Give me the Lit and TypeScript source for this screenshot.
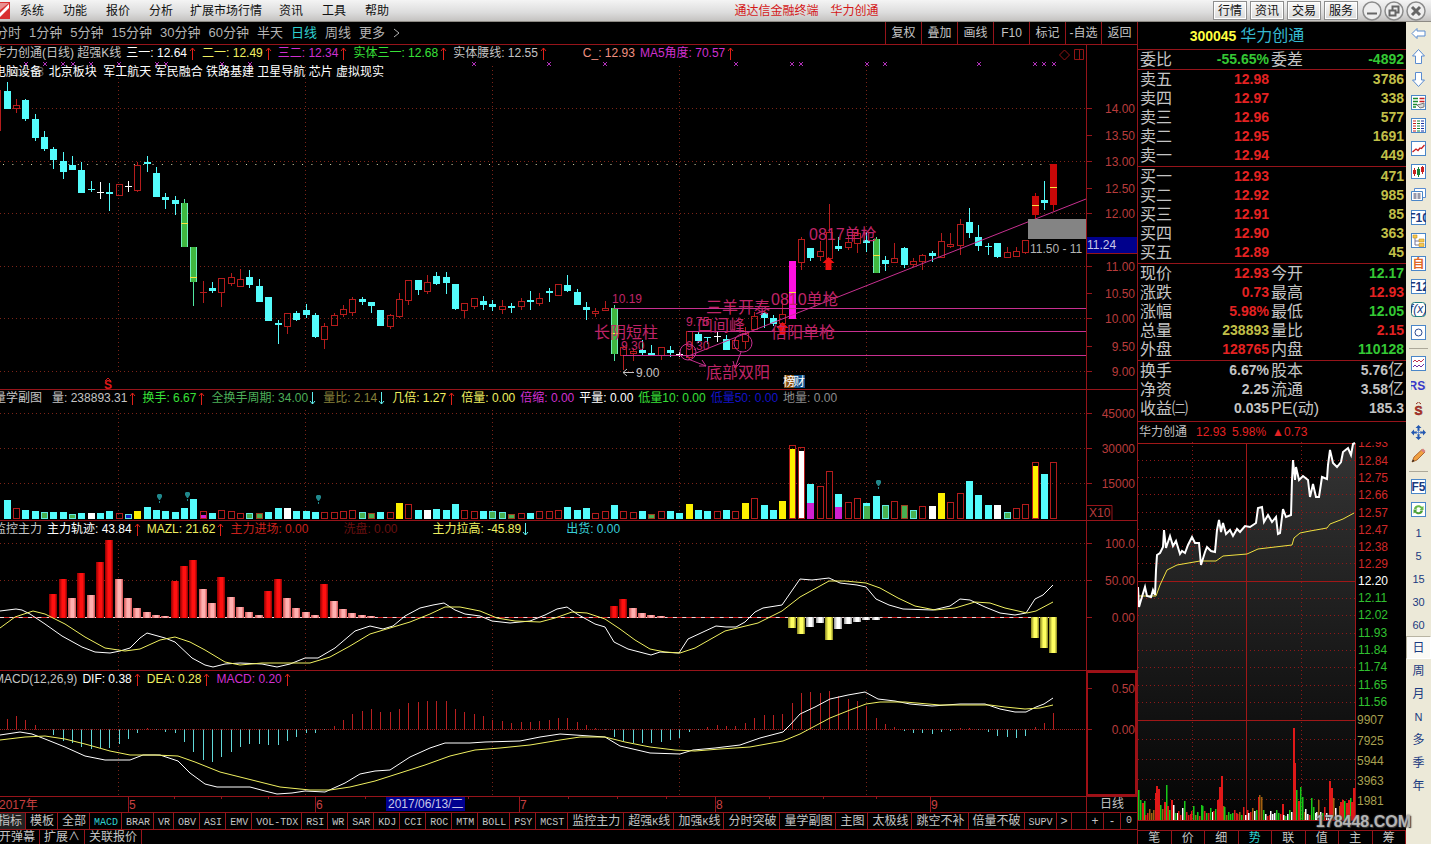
import { LitElement, html, svg, css } from "lit";
import { customElement, state } from "lit/decorators.js";

type Candle = [string, number, number, number, number];
type Legend = { t?: string; c?: string; a?: "up" | "down"; gap?: boolean };

/* Bars share one horizontal step across the four stacked panels. */
const STEP = 9.346;
const barX = (i: number) => Math.round(6.5 + STEP * i);

const CANDLES: Candle[] = [
  ["c",82,91,109,109],["r",99,105,108,113],["c",99,100,119,121],["c",114,119,138,141],["c",131,137,149,151],
  ["c",147,149,160,169],["c",152,161,172,179],["c",156,165,170,170],["c",162,170,193,193],["c",181,189,190,192],
  ["w",182,192,193,199],["c",183,192,194,211],["r",184,184,195,195],["w",181,186,187,192],["r",162,165,190,192],
  ["c",156,162,164,172],["c",167,173,197,197],["c",193,197,200,209],["c",196,200,204,215],["g",199,203,247,247],
  ["g",247,247,282,306],["r",281,292,292,303],["c",282,288,291,293],["r",278,278,292,307],["r",273,277,283,286],
  ["r",269,279,286,287],["c",270,277,285,288],["c",279,286,302,302],["c",297,297,321,321],["c",320,323,325,344],
  ["r",313,313,326,334],["c",311,313,320,321],["c",304,310,315,318],["c",313,315,337,338],["r",323,326,339,349],
  ["r",313,315,325,326],["r",305,309,314,317],["r",297,299,312,316],["c",297,299,302,305],["c",302,302,306,313],
  ["c",310,310,326,326],["r",314,315,326,329],["r",293,299,316,318],["r",280,280,300,305],["c",280,280,290,295],
  ["r",275,282,291,294],["c",272,276,284,285],["c",272,277,283,294],["c",284,284,309,310],["r",303,303,310,318],
  ["r",298,298,306,309],["c",296,301,305,310],["c",300,304,307,311],["r",300,306,309,314],["c",303,306,308,313],
  ["r",298,301,306,310],["c",291,300,302,310],["r",293,298,303,306],["c",288,291,293,302],["r",284,284,295,296],
  ["c",275,285,291,292],["c",289,292,305,305],["c",302,307,310,320],["r",308,311,313,317],["r",301,308,310,311],
  ["g",305,308,354,361],["r",345,347,355,370],["r",348,351,353,361],["c",340,350,353,355],["c",345,353,355,355],
  ["r",347,347,355,360],["c",346,350,353,357],["w",352,354,355,357],["r",331,331,357,360],["c",332,334,341,343],
  ["c",337,337,338,344],["w",332,336,337,342],["c",335,339,350,350],["r",338,340,348,349],["r",327,333,341,349],
  ["r",312,316,329,330],["c",312,313,318,328],["c",315,318,324,326],["r",301,314,323,328],["m",261,261,319,319],
  ["r",237,239,262,270],["c",248,248,258,261],["r",241,251,256,261],["r",204,232,258,260],["c",237,246,249,251],
  ["r",235,242,247,250],["r",229,233,243,253],["c",232,240,243,252],["g",237,239,273,273],["c",256,260,264,271],
  ["r",243,258,262,263],["c",247,248,265,268],["r",258,261,264,267],["r",254,255,261,270],["c",251,253,256,262],
  ["r",233,241,257,258],["r",233,244,246,248],["r",219,224,245,255],["c",208,222,233,238],["c",225,237,246,251],
  ["c",243,246,247,255],["c",243,243,257,258],["r",247,252,257,258],["r",247,251,256,257],["r",240,240,252,254],
  ["R",193,196,215,219],["c",181,200,203,210],["R",164,164,205,211],
];
const MID_MARKS: [number, number][] = [[19,223],[20,277],[65,333],[84,292],[93,255],[110,205],[112,187]];

const VOLUME =
  "c500 r508 c510 c511 g512 c512 c512 g514 c513 w513 c513 c511 r513 b514 y511 c507 c510 c511 c512 c508 c499 p511 c513 r510 r511 r513 g513 g513 c512 c508 w508 c511 c511 c512 r512 r512 r511 r510 g512 g513 c512 r512 y503 r504 c510 w510 c509 c510 c504 r510 r511 c511 g511 g512 g514 r513 c513 r511 r511 r510 c507 c510 c508 r513 r511 c505 r511 r512 c511 g514 r511 c511 c513 y504 c510 c511 r511 c510 r511 y503 r498 c505 c510 y501 y445 w447 c484 r486 r471 c494 r502 r498 c503 c496 g505 r501 g505 g510 r506 w506 y493 r502 r493 c481 c495 c505 w505 g512 r508 r504 y462 c474 r462".split(" ");

const FORCE: [number, string, number][] = [
  [5,"R",594],[6,"R",579],[7,"P",598],[8,"R",573],[9,"P",595],[10,"R",562],[11,"R",540],[12,"P",579],[13,"P",598],[14,"P",608],
  [15,"P",612],[16,"P",615],[17,"P",616],[18,"R",581],[19,"R",566],[20,"R",560],[21,"P",589],[22,"P",603],[23,"R",577],[24,"P",597],
  [25,"P",607],[26,"P",612],[27,"P",615],[28,"R",591],[29,"R",579],[30,"P",598],[31,"P",608],[32,"P",612],[33,"P",615],[34,"R",584],
  [35,"P",601],[36,"P",609],[37,"P",613],[38,"P",615],[39,"P",616],[65,"R",606],[66,"R",599],[67,"P",608],[68,"P",613],[69,"P",615],
  [70,"P",616],[84,"Y",627],[85,"Y",633],[86,"W",626],[87,"W",622],[88,"Y",639],[89,"W",628],[90,"W",623],[91,"W",621],[92,"W",619],
  [93,"W",619],[110,"Y",637],[111,"Y",647],[112,"Y",652],
];
const FORCE_WHITE = "0,611 16,609 22,610 30,614 45,624 62,636 82,647 95,652 110,653 120,651 130,648 140,638 147,633 165,638 175,642 192,658 205,665 213,667 225,664 240,663 262,664 277,667 290,664 305,658 318,658 335,648 355,631 370,626 383,629 393,626 405,616 420,608 433,605 444,603 455,610 465,614 480,616 492,621 510,623 530,621 545,615 557,609 567,607 577,614 595,624 605,627 614,642 628,649 651,655 660,652 679,653 688,639 716,626 726,627 736,627 745,622 755,612 763,608 782,605 791,592 800,579 812,580 829,578 840,583 857,585 866,587 876,599 889,605 903,609 933,610 950,606 960,599 970,600 985,607 1000,613 1015,615 1026,613 1035,599 1043,595 1053,585";
const FORCE_YELLOW = "0,628 15,617 33,611 45,614 65,624 85,637 105,648 125,651 140,649 160,640 175,637 190,642 205,650 225,662 240,665 262,663 290,663 310,663 330,657 350,646 370,634 390,628 410,622 430,614 445,607 460,607 480,611 497,618 515,621 540,622 555,618 572,612 587,613 605,619 620,629 635,640 650,649 665,652 680,653 695,648 725,631 758,623 782,611 800,597 829,581 845,581 866,583 880,588 898,598 915,606 935,610 955,608 975,602 990,603 1005,608 1027,613 1036,611 1053,602";

const MACD = [
  719,716,720,725,729,735,741,743,747,749,748,748,744,739,733,728,730,732,733,742,752,760,762,757,752,747,744,744,745,745,
  741,737,733,733,730,726,720,714,711,709,712,712,709,703,702,701,701,701,709,712,714,716,720,721,723,722,722,721,720,718,
  718,722,725,728,730,737,741,743,743,743,742,740,738,732,730,727,725,726,726,723,718,715,715,714,703,693,692,693,691,696,
  699,701,706,718,724,727,731,733,733,734,732,731,728,728,730,732,736,737,738,736,727,723,713,
];
const MACD_WHITE = "0,735 20,732 32,734 45,739 65,747 85,756 105,760 130,760 143,755 160,755 178,761 190,773 205,784 217,787 250,787 265,791 277,794 292,793 305,791 325,792 345,783 360,774 375,771 390,770 410,757 430,748 445,743 470,743 485,742 520,741 540,737 560,734 575,735 605,737 620,746 650,753 680,754 693,750 715,748 740,745 760,738 783,732 790,725 800,714 815,707 830,699 848,695 865,692 878,699 895,701 910,704 932,706 960,704 985,704 1000,709 1015,712 1026,712 1036,707 1044,704 1053,698";
const MACD_YELLOW = "0,740 25,737 45,736 65,739 85,744 110,751 130,755 155,755 178,756 195,762 220,772 240,777 260,782 280,787 310,790 330,790 350,787 375,781 400,773 425,765 450,756 475,750 500,748 530,745 560,740 580,737 605,737 625,742 650,747 675,750 695,751 720,749 750,747 783,741 800,734 830,718 850,710 866,704 880,702 905,702 940,705 990,705 1005,707 1025,709 1040,708 1053,705";

const MINI_PRICE = "1138,587 1139,607 1141,600 1145,587 1147,596 1151,597 1153,590 1155,595 1156,570 1157,555 1160,553 1163,547 1164,530 1166,548 1168,542 1170,536 1173,546 1176,541 1180,554 1182,551 1185,553 1188,545 1192,537 1195,543 1199,543 1201,565 1205,552 1207,547 1211,551 1215,552 1217,530 1219,520 1221,532 1223,523 1226,534 1230,530 1233,536 1237,529 1240,532 1245,526 1250,527 1256,523 1258,508 1262,507 1264,522 1268,515 1272,522 1276,517 1278,534 1280,533 1283,509 1286,517 1291,515 1292,480 1293,460 1295,480 1296,467 1299,480 1303,476 1308,480 1310,497 1313,484 1316,497 1319,497 1322,477 1327,479 1328,465 1330,450 1333,463 1337,467 1341,462 1343,452 1348,448 1351,455 1353,444 1355,443";
const MINI_AVG = "1138,596 1156,596 1160,585 1167,570 1177,565 1200,561 1216,561 1223,556 1247,554 1258,549 1292,545 1294,538 1300,533 1310,531 1327,528 1330,524 1343,519 1354,513";

const TICKS: Record<number, [number, string]> = {
  0: [790,"g"], 1: [800,"g"], 2: [803,"r"], 3: [801,"g"], 8: [810,"n"], 9: [793,"r"], 10: [786,"r"], 11: [789,"r"], 12: [805,"g"],
  14: [802,"r"], 15: [785,"g"], 16: [806,"r"], 18: [800,"r"], 25: [801,"g"], 30: [806,"g"], 34: [805,"g"], 35: [806,"g"],
  43: [800,"r"], 44: [787,"r"], 45: [776,"r"], 46: [806,"n"], 65: [797,"r"], 66: [795,"n"], 67: [797,"n"], 78: [804,"r"],
  84: [728,"r"], 85: [763,"r"], 86: [790,"g"], 87: [801,"r"], 88: [787,"g"], 89: [797,"g"], 94: [798,"g"], 95: [807,"g"], 98: [800,"n"],
  104: [781,"r"], 105: [788,"r"], 106: [798,"n"], 110: [802,"r"], 111: [800,"r"], 112: [801,"g"], 113: [803,"r"], 114: [800,"r"],
  115: [798,"g"], 116: [802,"r"], 117: [788,"r"],
};

const TABS = ["模板","全部","MACD","BRAR","VR","OBV","ASI","EMV","VOL-TDX","RSI","WR","SAR","KDJ","CCI","ROC","MTM","BOLL","PSY","MCST","监控主力","超强K线","加强K线","分时突破","量学副图","主图","太极线","跳空不补","倍量不破","SUPV"];

const mixed = (t: string) =>
  t.split(/([A-Z0-9\-+]+)/).filter(Boolean).map((p) => /^[A-Z0-9\-+]+$/.test(p) ? html`<span class="lat">${p}</span>` : p);

@customElement("app-root")
export class AppRoot extends LitElement {
  static styles = css`
    :host { display: block; --line: #96141a; --cjk: "Liberation Sans", "Noto Sans CJK SC", sans-serif;
      font: 12px/16px var(--cjk); color: #c4c4c4; background: #000; }
    * { box-sizing: border-box; }
    button { font: inherit; color: inherit; background: none; border: 0; padding: 0; margin: 0; white-space: nowrap; cursor: pointer; }
    svg { display: block; }
    .app { display: grid; grid-template-columns: minmax(0, 1fr) 269px 25px; grid-template-rows: 22px minmax(0, 1fr);
      height: 100vh; min-height: 600px; overflow: hidden; }

    .top { grid-column: 1 / -1; display: flex; align-items: center; background: linear-gradient(#f4f4f4, #dcdcdc 60%, #c4c2c0);
      border-bottom: 1px solid #8d8a84; color: #111; padding-right: 5px; }
    .menu { display: flex; gap: 19px; margin-left: 10px; }
    .menu .wide { margin: 0 -2px; }
    .title { flex: 1; display: flex; justify-content: center; gap: 12px; padding-left: 11px; color: #d41818; }
    .links { display: flex; gap: 3px; margin-right: 4px; }
    .links button { width: 34px; height: 19px; border: 1px solid #8e8e8e; background: linear-gradient(#fafafa, #dadada); box-shadow: inset 0 0 0 1px #fff; }
    .win { display: flex; gap: 2px; }

    .left { display: grid; grid-template-rows: 23px minmax(0, 345fr) minmax(0, 131fr) minmax(0, 150fr) minmax(0, 126fr) 16px 17px 14px; min-height: 0; }
    .periods { display: flex; justify-content: space-between; border-bottom: 1px solid var(--line); overflow: hidden; }
    .plist { display: flex; gap: 8px; margin-left: -5px; font-size: 13px; color: #b4b4b4; align-items: center; }
    .plist .on { color: #2fd0d0; }
    .tools { display: flex; font-size: 12px; }
    .tools button { width: 36px; border-left: 1px solid var(--line); }
    .panel { display: grid; grid-template-columns: minmax(0, 1fr) 51px; border-bottom: 1px solid var(--line); min-height: 0; }
    .plot { display: grid; grid-template: minmax(0, 1fr) / minmax(0, 1fr); min-height: 0; overflow: hidden; }
    .plot > * { grid-area: 1 / 1; }
    .plot > svg, .axis { width: 100%; height: 100%; min-height: 0; }
    .axis { border-left: 1px solid var(--line); }
    .axis.sel { border: 2px solid #a01016; }
    .head { z-index: 1; white-space: nowrap; align-self: start; margin-left: -6px; }
    .legend { display: flex; gap: 5px; line-height: 17px; }
    .legend i { display: inline-block; width: 10px; height: 13px; vertical-align: middle; }
    .blank { width: 25px; }
    .tags { white-space: pre; color: #fff; line-height: 20px; }
    .si { color: #c4c4c4 } .wh { color: #fff } .ye { color: #f0f060 } .ma { color: #d030d0 } .gr { color: #38e038 } .dg { color: #4cae58 }
    .ol { color: #86803a } .sa { color: #f09080 } .bl { color: #1414c8 } .gy { color: #8c8c8c } .re { color: #c8201c } .dr { color: #6a1010 } .te { color: #38cfd8 }

    .dates { display: grid; grid-template-columns: minmax(0, 1fr) 51px; border-bottom: 1px solid var(--line); }
    .dates svg { width: 100%; height: 100%; }
    .dates .unit { border-left: 1px solid var(--line); text-align: center; line-height: 15px; }
    .tabs { display: flex; border-bottom: 1px solid var(--line); overflow: hidden; line-height: 16px; }
    .tabs .set { display: flex; flex: 1; min-width: 0; overflow: hidden; margin-left: -6px; }
    .tabs button { flex: none; padding: 0 3px 0 4px; border-right: 1px solid var(--line); }
    .tabs .on { color: #2fd0d0; }
    .tabs .base { background: #222; }
    .tabs .zoom { display: flex; width: 51px; border-left: 1px solid var(--line); }
    .tabs .zoom button { flex: 1; padding: 0; }
    .tabs .zoom button:last-child { border: 0; }
    .lat { font: 10px/16px "Liberation Mono", monospace; }
    .foot { display: flex; margin-left: -5px; overflow: hidden; line-height: 14px; }
    .foot button { padding: 0 4px; border-right: 1px solid var(--line); }

    .side { display: grid; grid-template-rows: 28px auto auto auto auto auto 20px minmax(0, 1fr) 14px; border-left: 1px solid var(--line); min-height: 0; }
    .name { display: flex; justify-content: center; align-items: center; gap: 4px; border-bottom: 1px solid var(--line);
      font-size: 16px; line-height: 26px; color: #35b8d0; padding-right: 50px; margin: 0; font-weight: normal; }
    .name b { font-size: 14px; color: #ffff40; }
    table { width: 100%; border-collapse: collapse; table-layout: fixed; }
    .book { border-bottom: 1px solid var(--line); padding-bottom: 1px; }
    .book.tight { padding: 0; }
    .book.loose { padding-bottom: 3px; }
    tr { height: 19px; }
    th, td { padding: 0; line-height: 19px; white-space: nowrap; height: 19px; }
    th { font-size: 16px; font-weight: normal; text-align: left; padding-left: 2px; }
    td { font-size: 14px; font-weight: bold; text-align: right; }
    .c1 { width: 50px } .c2 { width: 81px } .c3 { width: 45px }
    td:last-child { padding-right: 2px; }
    td .yi { font-size: 16px; font-weight: normal; line-height: 18px; }
    .up { color: #e42222 } .dn { color: #34c834 } .vol { color: #c0bf48 }
    .mini-h { display: flex; gap: 6px; line-height: 20px; padding-left: 1px; }
    .mini-h .si { margin-right: 3px; }
    .mini { display: block; width: 100%; height: 100%; min-height: 0; }
    .stabs { display: flex; border-top: 1px solid var(--line); line-height: 15px; overflow: hidden; }
    .stabs button { flex: 1; border-right: 1px solid var(--line); }
    .stabs .on { color: #2fd0d0; }

    .dock { background: #ece9d8; color: #1a3a80; font-size: 11px; display: flex; flex-direction: column; min-height: 0; overflow: hidden; position: relative; }
    .dock button { height: 23px; display: flex; align-items: center; justify-content: center; flex: none; }
    .dock .cjk { font-size: 12px; }
    .dock .on { background: #fbfaf5; border: 1px solid #b8b4a2; border-right-color: #fff; border-bottom-color: #fff; }
    .dock hr { width: 19px; margin: 4px auto 3px; border: 0; border-top: 1px solid #aca899; flex: none; height: 1px; }
    .mark { position: absolute; right: 20px; bottom: 12px; font: bold 16px/20px "Liberation Sans", sans-serif; color: #b4b4b4;
      text-shadow: 0 0 2px #555, 1px 1px 1px #333; z-index: 3; }
    .frame { position: relative; }

    text { font-family: var(--cjk); font-size: 12px; }
    .note { font-size: 16px; fill: #c02468; }
    .ax { fill: #b83c3c; text-anchor: end; }
    .grid { stroke: #7c2418; stroke-dasharray: 1 3; fill: none; }
  `;

  @state() private period = "日线";
  @state() private tab = "MACD";

  private legend(items: Legend[]) {
    return html`<div class="legend">${items.map((l) => l.gap ? html`<span class="blank"></span>` : html`<span class=${l.c ?? "si"}>${l.t}${l.a
      ? html`<i><svg width="9" height="13" viewBox="0 0 9 13">${l.a === "up"
          ? svg`<path d="M5.500 13V1M3 4L5.500 1L8 4" fill="none" stroke="#e02018"/>`
          : svg`<path d="M4.500 0V12M2 9L4.500 12L7 9" fill="none" stroke="#60f0f0"/>`}</svg></i>` : ""}</span>`)}</div>`;
  }

  private verticals(y1: number, y2: number) {
    return [118.5, 305.5, 492.5, 679.5, 866.5].map((x) => svg`<path class="grid" d="M${x} ${y1}V${y2}"/>`);
  }
  private rows(ys: number[]) {
    return ys.map((y) => svg`<path class="grid" d="M0 ${y + 0.5}H1086"/>`);
  }

  private candle([k, hi, top, bot, lo]: Candle, i: number) {
    const x = barX(i), h = Math.max(bot - top, 1);
    const col: Record<string, string> = { c: "#54fcfc", r: "#b41c1c", w: "#fff", g: "#50e8a0", m: "#ff10e0", R: "#c80808" };
    const c = col[k];
    if (k === "r") return svg`<path d="M${x + 0.5} ${hi}V${top}M${x + 0.5} ${bot}V${lo}" stroke=${c}/>
      ${h < 2 ? svg`<path d="M${x - 3} ${top + 0.5}h7M${x + 0.5} ${top}v${lo - top}" stroke=${c}/>` : svg`<rect x=${x - 2.5} y=${top + 0.5} width="6" height=${h} fill="none" stroke=${c}/>`}`;
    const fill = k === "g" ? "#40b840" : c;
    return svg`<path d="M${x + 0.5} ${hi}V${lo}" stroke=${c}/><rect x=${x - 3} y=${top} width="7" height=${h} fill=${fill}/>
      ${k === "g" ? svg`<path d="M${x - 2.5} ${top}V${bot}M${x + 3.5} ${top}V${bot}" stroke="#70f0c0"/>` : ""}`;
  }

  private priceChart() {
    const xs = [26,45,63,73,91,119,157,166,222,250,474,549,605,736,792,801,867,885,979,1035,1044,1054];
    return svg`
      ${this.verticals(66, 374)}${this.rows([108, 161, 213, 266, 318, 371])}
      <path d="M3 164.500H1050" stroke="#d8d8b0" stroke-dasharray="1 8.346"/>
      ${xs.map((x) => svg`<path d="M${x - 2} 62l4 4m0 -4l-4 4" stroke="#b030b8"/>`)}
      <path d="M0.500 90V131" stroke="#b41c1c"/>
      ${CANDLES.map((c, i) => this.candle(c, i))}
      ${MID_MARKS.map(([i, y]) => svg`<path d="M${barX(i) - 3} ${y + 0.5}h7" stroke="#f8e040"/>`)}
      <g stroke="#c83090" fill="none">
        <path d="M614 308.500H1086M688 331.500H1086M623 355.500H1086M686 357L1086 199"/>
        <ellipse cx="688" cy="352" rx="8" ry="8"/><ellipse cx="743" cy="343" rx="9" ry="9"/>
        <path d="M688 359L706 366M699 366l7 0l-4 -6M741 352L735 368M733 361l2 7l5 -5"/>
      </g>
      <path d="M828.500 257l6 6h-3v7h-6v-7h-3zM782.500 322l6 6h-3v6h-6v-6h-3z" fill="#f01010"/>
      <g class="note">
        <text class="note" x="809" y="240">0817单枪</text><text class="note" x="771" y="305">0810单枪</text>
        <text class="note" x="706" y="313">三羊开泰</text><text class="note" x="697" y="331">凹间峰</text>
        <text class="note" x="594" y="338">长阴短柱</text><text class="note" x="771" y="338">倍阳单枪</text>
        <text class="note" x="706" y="378">底部双阳</text>
        <text x="612" y="303">10.19</text><text x="686" y="326">9.75</text><text x="621" y="350">9.30</text><text x="686" y="350">9.30</text>
      </g>
      <path d="M634 372.500H623M627 369l-4 3.500l4 3.500" stroke="#c4c4c4" fill="none"/>
      <text x="636" y="377" fill="#c4c4c4">9.00</text>
      <rect x="1028" y="219" width="58" height="20" fill="#848484"/>
      <text x="1030" y="253" fill="#b4b4b4">11.50 - 11</text>
      <text x="14" y="76" fill="#606060">14.53</text>
      <path d="M1064.500 50l5 5l-5 5l-5 -5zM1074.500 49.500h9v10h-9zM1079.500 49.500v10" fill="none" stroke="#901414"/>
      <path d="M105 381l3 -3l3 3" fill="none" stroke="#d01818"/><text x="104" y="389" fill="#e01818" font-weight="bold">S</text>
      <rect x="784" y="375" width="10" height="13" fill="#8a5010"/><rect x="794" y="375" width="11" height="13" fill="#10508c"/>
      <text x="783" y="386" fill="#fff" textLength="0">榜</text><text x="793" y="386" fill="#fff">财</text>`;
  }

  private volumeChart() {
    const col: Record<string, string> = { c: "#54fcfc", g: "#48b050", w: "#fff", y: "#fcf000", b: "#1020c0", p: "#d020d0" };
    return svg`${this.verticals(410, 519)}${this.rows([413, 448, 483])}
      ${VOLUME.map((v, i) => {
        const k = v[0], top = +v.slice(1), x = barX(i) - 3;
        if (k === "r") return svg`<rect x=${x + 0.5} y=${top + 0.5} width="6" height=${518 - top} fill="none" stroke="#b41c1c"/>`;
        const capped = (k === "y" || k === "w" || k === "p") && (top < 470 || k === "p");
        const edge = k === "g" || k === "b";
        return svg`<rect x=${x} y=${top + (capped ? 4 : 0)} width="7" height=${519 - top - (capped ? 4 : 0)} fill=${col[k]}/>
          ${capped || edge ? svg`<rect x=${x + 0.5} y=${top + 0.5} width="6" height=${518 - top} fill="none" stroke=${edge ? (i % 3 ? "#60e8e0" : "#a04020") : "#b41c1c"}/>` : ""}`;
      })}
      <path d="M807 503h7v16h-7zM835 507h7v12h-7z" fill="#d020d0"/><path d="M864 506h6v13h-6z" fill="#48b050"/>
      ${[[159, 494], [187, 492], [318, 495], [878, 480]].map(([x, y]) => svg`<path d="M${x - 1} ${y}h3l1 1v2l-2 3h-1l-2 -3v-2zM${x} ${y + 7}h1v2h-1z" fill="#20888c"/>`)}`;
  }

  private forceChart() {
    return svg`
      <defs>
        ${[["R", "#8c0000", "#ff1010"], ["P", "#d05050", "#ffb0b0"], ["Y", "#84801c", "#ffff60"], ["W", "#909090", "#fff"]].map(([id, a, b]) =>
          svg`<linearGradient id=${id}><stop offset="0" stop-color=${a}/><stop offset=".4" stop-color=${b}/><stop offset=".7" stop-color=${b}/><stop offset="1" stop-color=${a}/></linearGradient>`)}
      </defs>
      ${this.verticals(541, 670)}${this.rows([543, 580])}
      <path d="M0 617.500H1050" stroke="#d02020"/><path d="M0 617.500H1050" stroke="#f8d8d8" stroke-dasharray="4 5.346"/>
      ${FORCE.map(([i, k, y]) => svg`<rect x=${barX(i) - 4} y=${Math.min(y, 617)} width="8" height=${Math.abs(y - 617) + 1} fill="url(#${k})"/>`)}
      <polyline points=${FORCE_WHITE} fill="none" stroke="#fff"/><polyline points=${FORCE_YELLOW} fill="none" stroke="#f0f060"/>`;
  }

  private macdChart() {
    return svg`${this.verticals(690, 796)}
      <path d="M0 729.500H1086" stroke="#a01c1c" stroke-dasharray="1 1"/>
      ${MACD.map((y, i) => svg`<path d="M${barX(i) + 0.5} 729.500V${y}" stroke=${y < 730 ? "#b82020" : "#60d8d8"}/>`)}
      <polyline points=${MACD_WHITE} fill="none" stroke="#fff"/><polyline points=${MACD_YELLOW} fill="none" stroke="#f0f060"/>`;
  }

  private labels(items: [number, string][]) {
    return items.map(([y, t]) => svg`<path d="M1087 ${y + 0.5}h5" stroke="#96141a"/><text class="ax" x="1135" y=${y + 5}>${t}</text>`);
  }

  private miniChart() {
    const colors: Record<string, string> = { r: "#e01818", g: "#18c818", w: "#fff", n: "#a06010" };
    const bars = Array.from({ length: 118 }, (_, i) => {
      const near = TICKS[i];
      const n = (i * 37 + ((i * i) % 23) * 11) % 17;
      const top = near ? near[0] : 819 - Math.round(3 + n * (i > 100 || i < 20 ? 0.9 : 0.55));
      const k = near ? near[1] : ["r", "g", "w", "n", "r", "w", "g"][(i * 5 + n) % 7];
      return svg`<rect x=${Math.round(1138 + i * 1.84)} y=${top} width=${k === "r" && near ? 2 : 1.5} height=${820 - top} fill=${colors[k]}/>`;
    });
    const red: [number, string][] = [[442,"12.93"],[460,"12.84"],[477,"12.75"],[494,"12.66"],[512,"12.57"],[529,"12.47"],[546,"12.38"],[563,"12.29"]];
    const green: [number, string][] = [[598,"12.11"],[615,"12.02"],[633,"11.93"],[650,"11.84"],[667,"11.74"],[685,"11.65"],[702,"11.56"]];
    const vol: [number, string][] = [[720,"9907"],[741,"7925"],[761,"5944"],[781,"3963"],[801,"1981"]];
    return html`<svg class="mini" viewBox="1138 442 268 388" preserveAspectRatio="none">
      <defs><linearGradient id="shade" x1="0" y1="0" x2="0" y2="1"><stop offset="0" stop-color="#343434"/><stop offset=".75" stop-color="#101010"/><stop offset="1" stop-color="#040404"/></linearGradient></defs>
      <polygon points="1138,820 ${MINI_PRICE} 1355,820" fill="url(#shade)"/>
      ${[460,477,494,512,529,546,563,598,615,633,650,667,685,702,739,759,779,799].map((y) => svg`<path d="M1138 ${y + 0.5}H1355" stroke="#901818" stroke-dasharray="1 3"/>`)}
      <path d="M1192.500 442V820M1301.500 442V820" stroke="#901818" stroke-dasharray="1 3"/>
      <path d="M1138 443.500H1355M1138 581.500H1355M1138 720.500H1355M1246.500 443V820M1355.500 443V820M1138 820.500H1355" stroke="#a01818" fill="none"/>
      ${bars}
      <polyline points=${MINI_AVG} fill="none" stroke="#f0e040"/>
      <polyline points=${MINI_PRICE} fill="none" stroke="#fff" stroke-width="2"/>
      ${red.map(([y, t]) => svg`<text x="1358" y=${y + 5} fill="#d02828">${t}</text>`)}
      <text x="1358" y="585" fill="#fff">12.20</text>
      ${green.map(([y, t]) => svg`<text x="1358" y=${y + 4} fill="#30c030">${t}</text>`)}
      ${vol.map(([y, t]) => svg`<text x="1357" y=${y + 4} fill="#a8a050">${t}</text>`)}
    </svg>`;
  }

  private book(side: string, names: string, rows: [string, string][]) {
    return html`<div class="book"><table><tbody>${rows.map(([p, v], i) =>
      html`<tr><th scope="row" class="c1">${side}${names[i]}</th><td class="c2 up">${p}</td><td class="vol">${v}</td></tr>`)}</tbody></table></div>`;
  }

  private facts(cls: string, rows: string[][]) {
    return html`<div class="book ${cls}"><table><tbody>${rows.map(([a, b, bc, c, d, dc]) => html`<tr>
      <th scope="row" class="c1">${a}</th><td class="c2 ${bc}">${b}</td><th scope="row" class="c3">${c}</th>
      <td class=${dc}>${d.replace("亿", "")}${d.endsWith("亿") ? html`<span class="yi">亿</span>` : ""}</td></tr>`)}</tbody></table></div>`;
  }

  private icon(kind: string) {
    const box = svg`<rect x=".5" y=".5" width="14" height="14" fill="#fff" stroke="#4a86c8"/>`;
    const word = (t: string) => svg`${box}<text x="7.500" y="12" text-anchor="middle" font-size="10" fill="#1a3a80" font-weight="bold">${t}</text>`;
    const shapes: Record<string, unknown> = {
      left: svg`<path d="M1 7.500L6 2.500V5H14V10H6V12.500Z" fill="#fff" stroke="#5a8cd0"/>`,
      up: svg`<path d="M7.500 0.500L13.500 7H10.500V14.500H4.500V7H1.500Z" fill="#fff" stroke="#5a8cd0"/>`,
      down: svg`<path d="M7.500 14.500L13.500 8H10.500V0.500H4.500V8H1.500Z" fill="#fff" stroke="#5a8cd0"/>`,
      report: svg`${box}<path d="M2 3.500h5M2 6.500h5M2 9.500h4M2 12h3" stroke="#1c8a30" stroke-width="1.500"/><path d="M8.500 3.500h5M8.500 6.500h5" stroke="#c82020" stroke-width="1.500"/><path d="M6 10l3 3l4 -1v-4l-3 1z" fill="#d8d8d8" stroke="#777"/>`,
      list: svg`${box}<path d="M2 3h3M2 5.500h3M2 8h3M2 10.500h3M2 13h3" stroke="#c82020"/><path d="M6 3h3M6 5.500h3M6 8h3M6 10.500h3M6 13h3" stroke="#188030"/><path d="M10 3h3M10 5.500h3M10 8h3M10 10.500h3M10 13h3" stroke="#1830a0"/>`,
      trend: svg`${box}<path d="M1.500 11L5 8L7 9.500L9 7L10.500 7.500L13.500 4" fill="none" stroke="#c82020" stroke-width="1.300"/>`,
      candles: svg`${box}<path d="M3.500 4v8M11.500 2v8" stroke="#c82020"/><path d="M7.500 3v10" stroke="#188030"/><path d="M2 6h3v4H2zM10 3h3v5h-3z" fill="#c82020"/><path d="M6 5h3v6H6z" fill="#188030"/>`,
      stack: svg`<path d="M3.500 1.500h11v9h-11z" fill="#fff" stroke="#5a8cd0"/><path d="M.5 4.500h11v9H.5z" fill="#fff" stroke="#4a86c8"/><path d="M2.500 7h3M2.500 9h3M2.500 11h3M6.500 7h3M6.500 9h3M6.500 11h3" stroke="#335"/>`,
      f10: word("F10"), f12: word("F12"), f5: word("F5"),
      tree: svg`${box}<path d="M4 5v7h4M4 8h4" fill="none" stroke="#779"/><path d="M2 2h4v3H2zM8 6h5v3H8zM8 10.500h5v3H8z" fill="#f4c850" stroke="#c89020" stroke-width=".6"/>`,
      self: svg`${box}<text x="7.500" y="12" text-anchor="middle" font-size="11" font-weight="bold" fill="#e06828">自</text>`,
      fx: svg`<rect x=".5" y=".5" width="14" height="14" rx="3" fill="#fff" stroke="#208080"/><text x="7.500" y="11" text-anchor="middle" font-size="9" font-style="italic" fill="#1a3a80">f(x)</text>`,
      ring: svg`${box}<circle cx="7.500" cy="7.500" r="3.500" fill="none" stroke="#2a4a90"/>`,
      waves: svg`${box}<path d="M2 6l2 -2l2 2l2 -2l2 2l3 -3" fill="none" stroke="#c03050"/><path d="M2 11l2 -2l2 2l2 -2l2 2l3 -3" fill="none" stroke="#7030a0"/>`,
      rsi: svg`<text x="7.500" y="11" text-anchor="middle" font-size="10" font-weight="bold" fill="#3838c8">RSI</text>`,
      money: svg`<text x="7.500" y="13" text-anchor="middle" font-size="14" font-weight="bold" fill="#c03028" stroke="#702018" stroke-width=".5">S</text><path d="M5 2l2.500 -2l2.500 2" fill="none" stroke="#903020"/>`,
      move: svg`<path d="M7.500 0l3 3h-2v3h-2V3h-2zM7.500 15l3 -3h-2V9h-2v3h-2zM0 7.500l3 -3v2h3v2H3v2zM15 7.500l-3 -3v2H9v2h3v2z" fill="#2458b0"/><path d="M5.500 7.500h4M7.500 5.500v4" stroke="#7098d8"/>`,
      pen: svg`<path d="M1 14l2 -5L11 1.500l3 2.500L6 12z" fill="#f0a040" stroke="#985020" stroke-width=".8"/><path d="M10 2.500l3 2.500l1.500 -2L12 .5z" fill="#d88080"/><path d="M1 14l1 -2.500l1.500 1.500z" fill="#222"/>`,
      sync: svg`${box}<path d="M3 7c0 -4 6 -5 8 -2l1.500 -1v4h-4L10 6.500C8 4.500 6 5 5.500 7z" fill="#68b848"/><path d="M12 8.500c0 4 -6 5 -8 2L2.500 11.500v-4h4L5 9c2 2 4 1.500 4.500 -.5z" fill="#4ca038"/>`,
    };
    return html`<svg width="15" height="15" viewBox="0 0 15 15">${shapes[kind]}</svg>`;
  }

  render() {
    const group = (names: string[]) => names.map((n) => html`<button aria-label=${n}>${this.icon(n)}</button>`);
    return html`<div class="app">
      <header class="top">
        <svg width="10" height="17" viewBox="0 0 10 17"><rect width="10" height="17" fill="#d83030"/><path d="M0 11L9 2V6L0 15Z" fill="#fff"/><path d="M0 1h9L0 8z" fill="#e89090"/></svg>
        <nav class="menu">${["系统","功能","报价","分析","扩展市场行情","资讯","工具","帮助"].map((m) => html`<button class=${m.length > 2 ? "wide" : ""}>${m}</button>`)}</nav>
        <div class="title"><span>通达信金融终端</span><span>华力创通</span></div>
        <div class="links">${["行情","资讯","交易","服务"].map((m) => html`<button>${m}</button>`)}</div>
        <div class="win">${["M5 12.500h10", "M8.500 9V5.500h6v6h-3M5.500 9.500h6v5h-6z", "M6 6l8 8M14 6l-8 8"].map((d, i) => html`<button aria-label=${["minimize", "restore", "close"][i]}>
          <svg width="20" height="20" viewBox="0 0 20 20"><circle cx="10" cy="10" r="9" fill="#eee" stroke="#8c8c8c" stroke-width="1.500"/><path d=${d} fill="none" stroke="#666" stroke-width=${i === 2 ? 3 : 2}/></svg></button>`)}</div>
      </header>

      <main class="left">
        <div class="periods">
          <div class="plist">${["分时","1分钟","5分钟","15分钟","30分钟","60分钟","半天","日线","周线","更多"].map((p) =>
            html`<button class=${p === this.period ? "on" : ""} @click=${() => (this.period = p)}>${p}</button>`)}
            <svg width="8" height="10" viewBox="0 0 8 10"><path d="M1 1l5 4l-5 4" fill="none" stroke="#b4b4b4"/></svg></div>
          <div class="tools">${["复权","叠加","画线","F10","标记","-自选","返回"].map((t) => html`<button>${t}</button>`)}</div>
        </div>

        <section class="panel"><div class="plot">
          <svg viewBox="0 45 1086 344" preserveAspectRatio="none">${this.priceChart()}</svg>
          <div class="head">${this.legend([
            { t: "华力创通(日线) 超强K线" }, { t: "三一: 12.64", c: "wh", a: "up" }, { t: "二一: 12.49", c: "ye", a: "up" },
            { t: "三二: 12.34", c: "ma", a: "up" }, { t: "实体三一: 12.68", c: "gr", a: "up" }, { t: "实体腰线: 12.55", a: "up" },
            { gap: true }, { t: "C_: 12.93", c: "sa" }, { t: "MA5角度: 70.57", c: "ma", a: "up" }])}
            <div class="tags">电脑设备  北京板块  军工航天 军民融合 铁路基建 卫星导航 芯片 虚拟现实</div></div>
        </div>
          <svg class="axis" viewBox="1087 45 50 344" preserveAspectRatio="none">
            ${this.labels([[108,"14.00"],[135,"13.50"],[161,"13.00"],[188,"12.50"],[213,"12.00"],[266,"11.00"],[293,"10.50"],[318,"10.00"],[346,"9.50"],[371,"9.00"]])}
            <rect x="1087" y="237" width="50" height="16" fill="#00008c"/><path d="M1087 253.500h50" stroke="#96141a"/><text x="1087" y="249" fill="#c8c8e8">11.24</text>
          </svg></section>

        <section class="panel"><div class="plot">
          <svg viewBox="0 390 1086 130" preserveAspectRatio="none">${this.volumeChart()}</svg>
          <div class="head">${this.legend([
            { t: "量学副图" }, {}, { t: "量: 238893.31", a: "up" }, { t: "换手: 6.67", c: "gr", a: "up" }, { t: "全换手周期: 34.00", c: "dg", a: "down" },
            { t: "量比: 2.14", c: "ol", a: "down" }, { t: "几倍: 1.27", c: "ye", a: "up" }, { t: "倍量: 0.00", c: "ye" }, { t: "倍缩: 0.00", c: "ma" },
            { t: "平量: 0.00", c: "wh" }, { t: "低量10: 0.00", c: "gr" }, { t: "低量50: 0.00", c: "bl" }, { t: "地量: 0.00", c: "gy" }])}</div>
        </div>
          <svg class="axis" viewBox="1087 390 50 130" preserveAspectRatio="none">
            ${this.labels([[413,"45000"],[448,"30000"],[483,"15000"]])}
            <path d="M1087 505.500h25V520" fill="none" stroke="#96141a"/><text x="1089" y="517" fill="#b83c3c">X10</text>
          </svg></section>

        <section class="panel"><div class="plot">
          <svg viewBox="0 521 1086 149" preserveAspectRatio="none">${this.forceChart()}</svg>
          <div class="head">${this.legend([
            { t: "监控主力" }, { t: "主力轨迹: 43.84", c: "wh", a: "up" }, { t: "MAZL: 21.62", c: "ye", a: "up" }, { t: "主力进场: 0.00", c: "re" },
            { gap: true }, { t: "洗盘: 0.00", c: "dr" }, { gap: true }, { t: "主力拉高: -45.89", c: "ye", a: "down" }, { gap: true }, { t: "出货: 0.00", c: "te" }])}</div>
        </div>
          <svg class="axis" viewBox="1087 521 50 149" preserveAspectRatio="none">${this.labels([[543,"100.0"],[580,"50.00"],[617,"0.00"]])}</svg></section>

        <section class="panel"><div class="plot">
          <svg viewBox="0 671 1086 125" preserveAspectRatio="none">${this.macdChart()}</svg>
          <div class="head">${this.legend([
            { t: "MACD(12,26,9)" }, { t: "DIF: 0.38", c: "wh", a: "up" }, { t: "DEA: 0.28", c: "ye", a: "up" }, { t: "MACD: 0.20", c: "ma", a: "up" }])}</div>
        </div>
          <svg class="axis sel" viewBox="1088 673 47 121" preserveAspectRatio="none">${this.labels([[688,"0.50"],[729,"0.00"]])}</svg></section>

        <div class="dates">
          <svg viewBox="0 797 1086 15" preserveAspectRatio="none">
            <path d="M128.500 797v15M315.500 797v15M519.500 797v15M715.500 797v15M930.500 797v15M174.500 797v2M221.500 797v2M268.500 797v2M365.500 797v2M468.500 797v2M568.500 797v2M617.500 797v2M666.500 797v2M769.500 797v2M823.500 797v2M876.500 797v2" stroke="#96141a"/>
            <text x="-1" y="809" fill="#c84040">2017年</text>
            ${[[129,"5"],[316,"6"],[520,"7"],[716,"8"],[931,"9"]].map(([x, t]) => svg`<text x=${x} y="809" fill="#c84040">${t}</text>`)}
            <rect x="386" y="797" width="79" height="14" fill="#000090"/><text x="388" y="808" fill="#c8c8e8">2017/06/13/二</text>
          </svg>
          <div class="unit">日线</div>
        </div>

        <div class="tabs">
          <div class="set"><button class="base">指标</button>${TABS.map((t) => html`<button class=${t === this.tab ? "on" : ""} @click=${() => (this.tab = t)}>${mixed(t)}</button>`)}<button>&gt;</button></div>
          <div class="zoom"><button>+</button><button>-</button><button class="lat">0</button></div>
        </div>
        <div class="foot"><button>开弹幕</button><button>扩展∧</button><button>关联报价</button></div>
      </main>

      <aside class="side">
        <h1 class="name"><b>300045</b>华力创通</h1>
        ${this.facts("tight", [["委比", "-55.65%", "dn", "委差", "-4892", "dn"]])}
        ${this.book("卖", "五四三二一", [["12.98", "3786"], ["12.97", "338"], ["12.96", "577"], ["12.95", "1691"], ["12.94", "449"]])}
        ${this.book("买", "一二三四五", [["12.93", "471"], ["12.92", "985"], ["12.91", "85"], ["12.90", "363"], ["12.89", "45"]])}
        ${this.facts("", [["现价", "12.93", "up", "今开", "12.17", "dn"], ["涨跌", "0.73", "up", "最高", "12.93", "up"], ["涨幅", "5.98%", "up", "最低", "12.05", "dn"],
          ["总量", "238893", "vol", "量比", "2.15", "up"], ["外盘", "128765", "up", "内盘", "110128", "dn"]])}
        ${this.facts("loose", [["换手", "6.67%", "", "股本", "5.76亿", ""], ["净资", "2.25", "", "流通", "3.58亿", ""], ["收益㈡", "0.035", "", "PE(动)", "185.3", ""]])}
        <div class="mini-h up"><span class="si">华力创通</span><span>12.93</span><span>5.98%</span><span>▲0.73</span></div>
        ${this.miniChart()}
        <div class="stabs">${[..."笔价细势联值主筹"].map((t) => html`<button class=${t === "势" ? "on" : ""}>${t}</button>`)}</div>
      </aside>

      <nav class="dock">
        ${group(["left","up","down","report","list","trend","candles","stack","f10","tree","self","f12","fx","ring"])}<hr>
        ${group(["waves","rsi","money","move","pen"])}<hr>
        ${group(["f5","sync"])}
        ${["1","5","15","30","60","日","周","月","N","多","季","年"].map((t) => html`<button class="${/[A-Z0-9]/.test(t) ? "" : "cjk"} ${t === "日" ? "on" : ""}">${t}</button>`)}
      </nav>
      <div class="mark">178448.COM</div>
    </div>`;
  }
}
